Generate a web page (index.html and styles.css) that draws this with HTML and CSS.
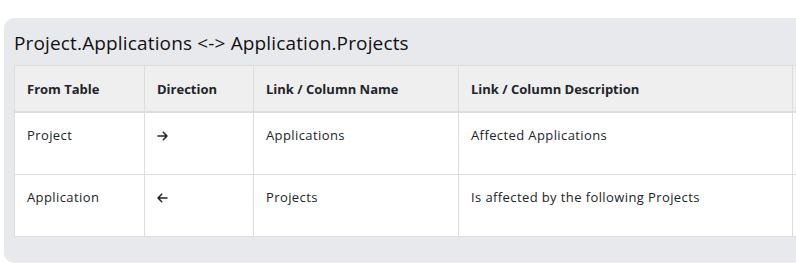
FILE: index.html
```html
<!DOCTYPE html>
<html>
<head>
<meta charset="utf-8">
<link rel="stylesheet" href="styles.css">
</head>
<body>
<div class="card">
  <h2 class="title">Project.Applications &lt;-&gt; Application.Projects</h2>
  <table class="links">
    <colgroup>
      <col class="c1"><col class="c2"><col class="c3"><col class="c4"><col class="c5">
    </colgroup>
    <thead>
      <tr>
        <th>From Table</th>
        <th>Direction</th>
        <th>Link / Column Name</th>
        <th>Link / Column Description</th>
        <th></th>
      </tr>
    </thead>
    <tbody>
      <tr>
        <td>Project</td>
        <td><svg class="arrow" viewBox="0 0 448 512"><path d="M438.6 278.6c12.5-12.5 12.5-32.8 0-45.3l-160-160c-12.5-12.5-32.8-12.5-45.3 0s-12.5 32.8 0 45.3L338.8 224 32 224c-17.7 0-32 14.3-32 32s14.3 32 32 32l306.7 0L233.4 393.4c-12.5 12.5-12.5 32.8 0 45.3s32.8 12.5 45.3 0l160-160z"/></svg></td>
        <td>Applications</td>
        <td>Affected Applications</td>
        <td></td>
      </tr>
      <tr>
        <td>Application</td>
        <td><svg class="arrow" viewBox="0 0 448 512"><path d="M9.4 233.4c-12.5 12.5-12.5 32.8 0 45.3l160 160c12.5 12.5 32.8 12.5 45.3 0s12.5-32.8 0-45.3L109.2 288 416 288c17.7 0 32-14.3 32-32s-14.3-32-32-32l-306.7 0L214.6 118.6c12.5-12.5 12.5-32.8 0-45.3s-32.8-12.5-45.3 0l-160 160z"/></svg></td>
        <td>Projects</td>
        <td>Is affected by the following Projects</td>
        <td></td>
      </tr>
    </tbody>
  </table>
</div>
</body>
</html>
```
FILE: styles.css
```css
html, body {
  margin: 0;
  padding: 0;
  overflow: hidden;
  background: #ffffff;
}
body {
  font-family: "Open Sans", "Liberation Sans", sans-serif;
  color: #212529;
  padding: 18px 0 0 4px;
}
.card {
  width: 900px;
  background: #e8e9ec;
  border-radius: 10px;
  padding: 13px 10px 26px 10px;
}
.title {
  margin: 0 0 10px 0;
  font-size: 19px;
  font-weight: 400;
  letter-spacing: 0.15px;
  line-height: 24px;
  color: #111;
}
.links {
  border-collapse: collapse;
  table-layout: fixed;
  width: 880px;
  background: #fff;
}
.c1 { width: 130px; }
.c2 { width: 109px; }
.c3 { width: 205px; }
.c4 { width: 334px; }
.links th, .links td {
  border: 1px solid #dcdde1;
  text-align: left;
  vertical-align: top;
  padding: 0 12px;
  font-size: 13px;
}
.links th {
  background: #efefef;
  font-weight: 700;
  height: 45px;
  vertical-align: middle;
  border-bottom: 2px solid #dcdde1;
}
.links td {
  height: 62px;
  padding-top: 12px;
  line-height: 20px;
  letter-spacing: 0.4px;
  box-sizing: border-box;
}
.arrow {
  width: 11px;
  height: 12px;
  fill: #212529;
  vertical-align: -2px;
}
```
